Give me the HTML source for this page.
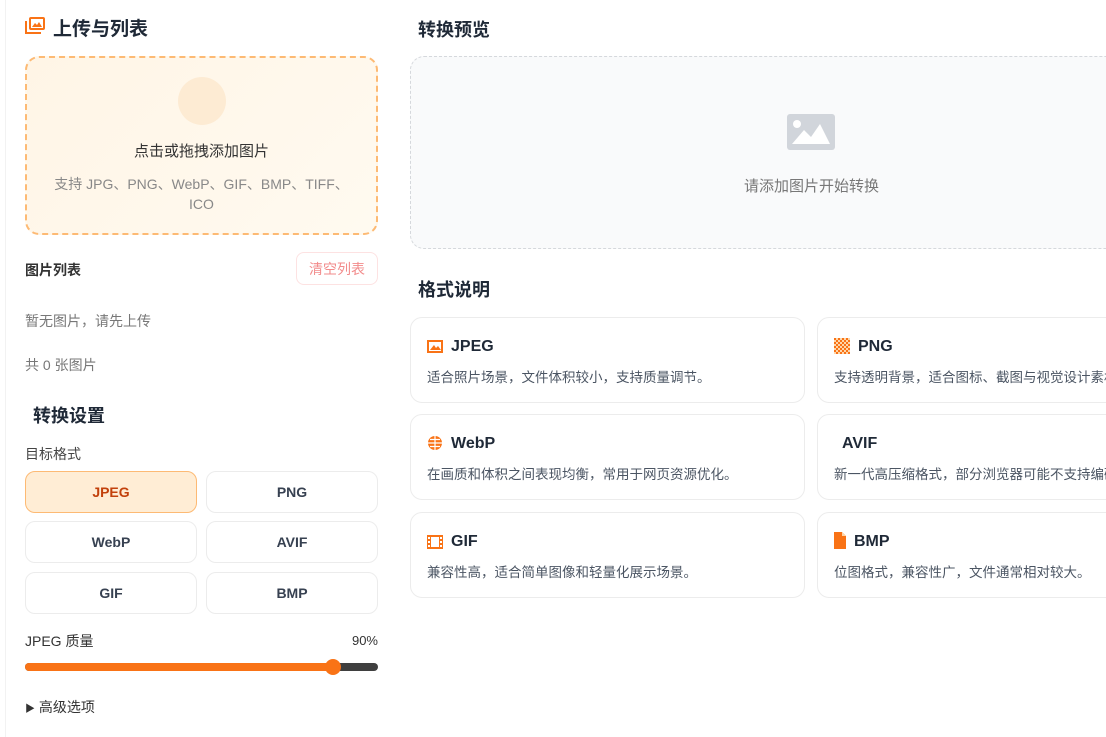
<!DOCTYPE html>
<html><head><meta charset="utf-8"><style>
*{box-sizing:border-box;margin:0;padding:0}
body{width:1106px;height:737px;overflow:hidden;background:#fff;font-family:"Liberation Sans","Noto Sans CJK SC",sans-serif;color:#1f2937;position:relative}
.a{position:absolute;white-space:nowrap}
.h{font-weight:700;font-size:18px;color:#1f2937}
.btn{position:absolute;border:1px solid #ececec;border-radius:10px;display:flex;align-items:center;justify-content:center;font-weight:700;font-size:14px;color:#374151;background:#fff}
.card{position:absolute;border:1px solid #ececec;border-radius:12px;background:#fff;width:395px;height:86px}
.card .t{position:absolute;left:40px;top:20px;font-weight:700;font-size:16px;color:#1f2937}
.card .d{position:absolute;left:16px;top:48px;font-size:13.5px;color:#4b5563;white-space:nowrap}
.card .i{position:absolute;left:16px;top:22px}
</style></head><body>
<div class="a" style="left:5px;top:0;width:1px;height:737px;background:#f2f2f2"></div>
<svg class="a" style="left:25px;top:17px" width="20" height="17" viewBox="0 0 20 17"><rect x="4" y="0" width="16" height="13" rx="2" fill="#f97316"/><rect x="6" y="2" width="12" height="9" fill="#fff"/><path d="M7 10 L10 6 L12 8 L14 5 L17 10Z" fill="#f97316"/><path d="M1 4 V16 H16" stroke="#f97316" stroke-width="2" fill="none"/></svg>
<div class="a h" style="left:53px;top:14px;font-size:19px">上传与列表</div>
<div class="a" style="left:25px;top:56px;width:353px;height:179px;border:2px dashed #fdba74;border-radius:14px;background:linear-gradient(135deg,#fff5e6,#fffaf0)"></div>
<div class="a" style="left:178px;top:77px;width:48px;height:48px;border-radius:50%;background:#fdebd3"></div>
<div class="a" style="left:25px;width:353px;text-align:center;top:140px;font-size:15px;color:#333">点击或拖拽添加图片</div>
<div class="a" style="left:45px;width:313px;text-align:center;top:174px;font-size:14px;line-height:20px;color:#888;white-space:normal">支持 JPG、PNG、WebP、GIF、BMP、TIFF、ICO</div>
<div class="a" style="left:25px;top:260px;font-size:14px;font-weight:700;color:#333">图片列表</div>
<div class="a" style="left:296px;top:252px;width:82px;height:33px;border:1px solid #fde2e2;border-radius:8px;color:#f28b8b;font-size:14px;display:flex;align-items:center;justify-content:center">清空列表</div>
<div class="a" style="left:25px;top:311px;font-size:14px;color:#777">暂无图片，请先上传</div>
<div class="a" style="left:25px;top:355px;font-size:14px;color:#777">共 0 张图片</div>
<div class="a h" style="left:33px;top:402px">转换设置</div>
<div class="a" style="left:25px;top:444px;font-size:14px;color:#444">目标格式</div>
<div class="btn" style="left:25px;top:471px;width:172px;height:42px;background:#ffedd5;border-color:#fdba74;color:#c2410c">JPEG</div>
<div class="btn" style="left:206px;top:471px;width:172px;height:42px">PNG</div>
<div class="btn" style="left:25px;top:521px;width:172px;height:42px">WebP</div>
<div class="btn" style="left:206px;top:521px;width:172px;height:42px">AVIF</div>
<div class="btn" style="left:25px;top:572px;width:172px;height:42px">GIF</div>
<div class="btn" style="left:206px;top:572px;width:172px;height:42px">BMP</div>
<div class="a" style="left:25px;top:631px;font-size:14px;color:#333">JPEG 质量</div>
<div class="a" style="left:340px;width:38px;text-align:right;top:633px;font-size:13px;color:#333">90%</div>
<div class="a" style="left:25px;top:663px;width:353px;height:8px;border-radius:4px;background:#3f3f3f"></div>
<div class="a" style="left:25px;top:663px;width:310px;height:8px;border-radius:4px;background:#f97316"></div>
<div class="a" style="left:325px;top:659px;width:16px;height:16px;border-radius:50%;background:#f97316"></div>
<div class="a" style="left:25px;top:697px;font-size:14px;color:#333"><span style="font-size:10px">▶</span> 高级选项</div>

<div class="a h" style="left:418px;top:16px">转换预览</div>
<div class="a" style="left:410px;top:56px;width:720px;height:193px;border:1px dashed #d5d8dc;border-radius:14px;background:#f9fafb"></div>
<svg class="a" style="left:787px;top:114px" width="48" height="36" viewBox="0 0 48 36"><rect width="48" height="36" rx="3" fill="#d1d5db"/><circle cx="10" cy="10" r="4" fill="#fff"/><path d="M5 30 L17 16 L24 23 L33 10 L43 30Z" fill="#fff"/></svg>
<div class="a" style="left:410px;width:803px;text-align:center;top:175px;font-size:15px;color:#777">请添加图片开始转换</div>
<div class="a h" style="left:418px;top:276px">格式说明</div>

<div class="card" style="left:410px;top:317px"><svg class="i" width="16" height="13"><rect width="16" height="13" fill="#f97316"/><rect x="2" y="2" width="12" height="9" fill="#fff"/><path d="M3 10 L7 5 L9 8 L11 6 L14 10Z" fill="#f97316"/></svg><div class="t">JPEG</div><div class="d">适合照片场景，文件体积较小，支持质量调节。</div></div>
<div class="card" style="left:817px;top:317px;width:320px"><svg class="i" style="top:20px" width="16" height="16"><pattern id="p" width="4" height="4" patternUnits="userSpaceOnUse"><rect width="2" height="2" fill="#f97316"/><rect x="2" y="2" width="2" height="2" fill="#f97316"/><rect x="2" width="2" height="2" fill="#fed7aa"/><rect y="2" width="2" height="2" fill="#fed7aa"/></pattern><rect width="16" height="16" fill="url(#p)"/></svg><div class="t">PNG</div><div class="d">支持透明背景，适合图标、截图与视觉设计素材。</div></div>
<div class="card" style="left:410px;top:414px"><svg class="i" style="top:20px" width="16" height="16" viewBox="0 0 16 16"><circle cx="8" cy="8" r="7" fill="#f97316"/><path d="M1 8H15M8 1V15M3 4.5H13M3 11.5H13" stroke="#fff" stroke-width="1.2"/></svg><div class="t">WebP</div><div class="d">在画质和体积之间表现均衡，常用于网页资源优化。</div></div>
<div class="card" style="left:817px;top:414px;width:320px"><div class="t" style="left:24px">AVIF</div><div class="d">新一代高压缩格式，部分浏览器可能不支持编码。</div></div>
<div class="card" style="left:410px;top:512px"><svg class="i" width="16" height="14" viewBox="0 0 16 14"><rect width="16" height="14" fill="#f97316"/><rect x="4" y="2" width="8" height="10" fill="#fff"/><rect x="1" y="2" width="2" height="2" fill="#fff"/><rect x="1" y="6" width="2" height="2" fill="#fff"/><rect x="1" y="10" width="2" height="2" fill="#fff"/><rect x="13" y="2" width="2" height="2" fill="#fff"/><rect x="13" y="6" width="2" height="2" fill="#fff"/><rect x="13" y="10" width="2" height="2" fill="#fff"/></svg><div class="t">GIF</div><div class="d">兼容性高，适合简单图像和轻量化展示场景。</div></div>
<div class="card" style="left:817px;top:512px;width:320px"><svg class="i" style="top:19px" width="12" height="17" viewBox="0 0 12 17"><path d="M0 0H8L12 4V17H0Z" fill="#f97316"/><path d="M8 0V4H12" fill="#fed7aa"/></svg><div class="t" style="left:36px">BMP</div><div class="d">位图格式，兼容性广，文件通常相对较大。</div></div>
</body></html>
